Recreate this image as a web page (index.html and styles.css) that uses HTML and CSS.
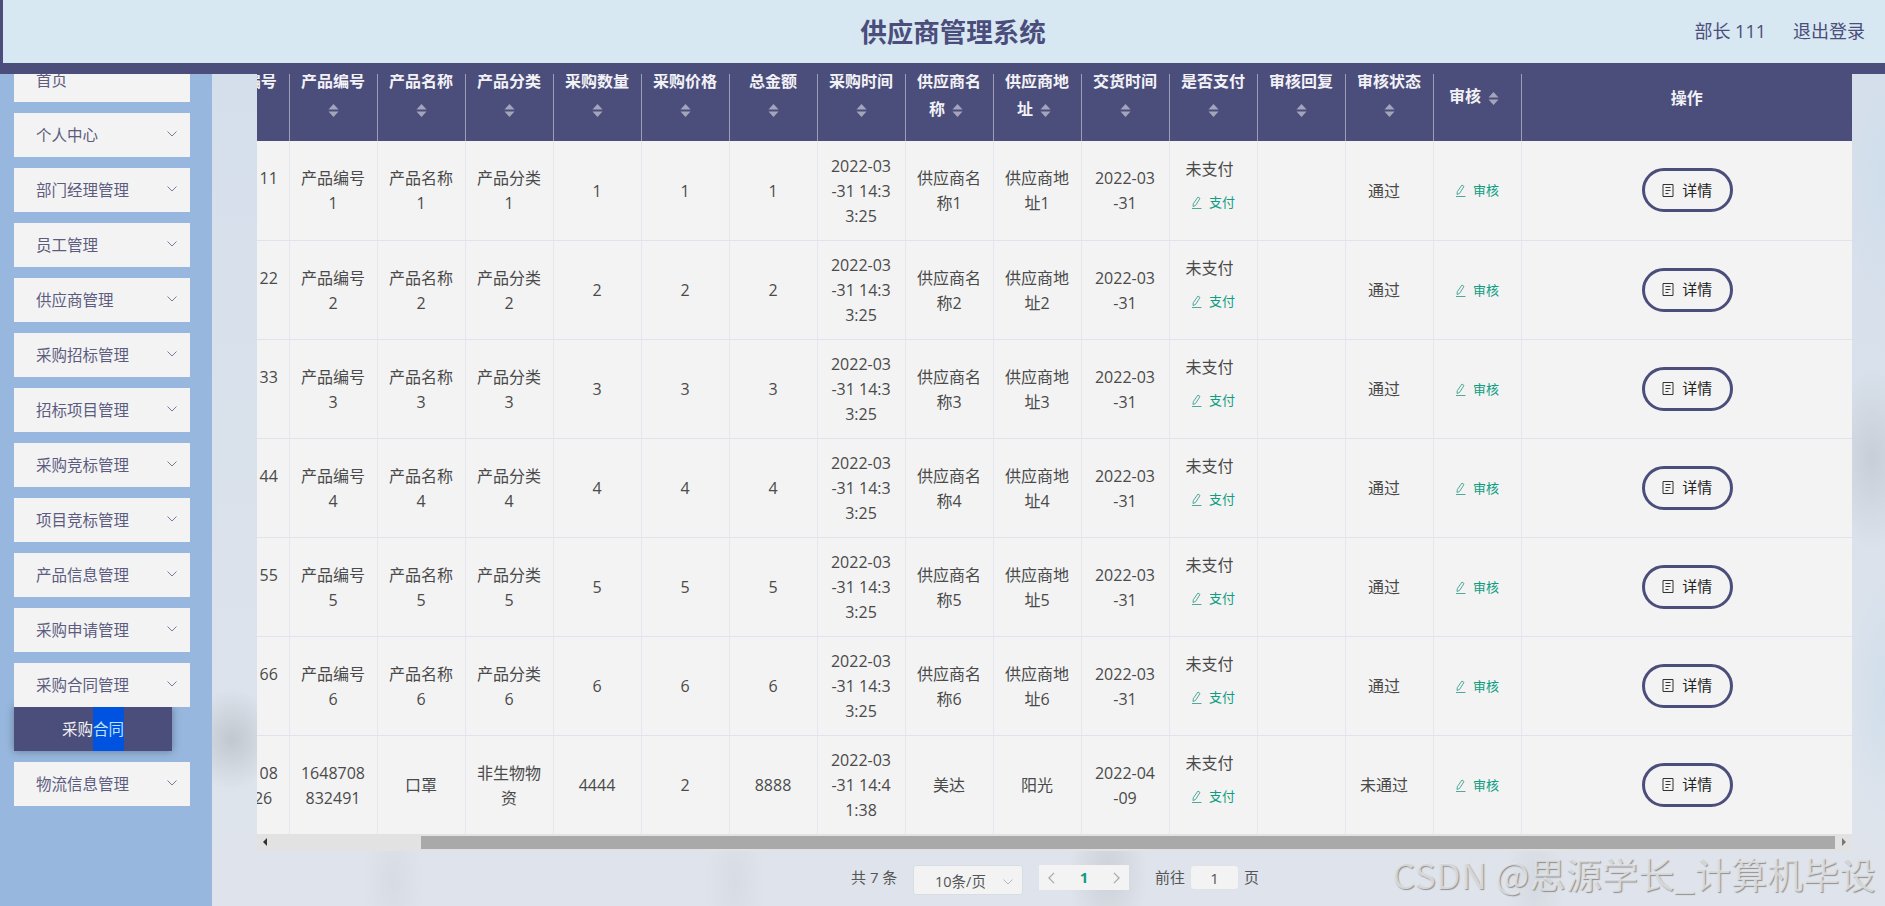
FILE: index.html
```html
<!DOCTYPE html>
<html lang="zh-CN">
<head>
    <meta charset="UTF-8">
    <meta name="viewport" content="width=device-width, initial-scale=1.0">
    <title>供应商管理系统</title>
    <link rel="stylesheet" href="styles.css">
</head>
<body>
    <header class="topBar">
        <div class="topTitle">供应商管理系统</div>
        <div class="topUser">
            <span>部长 111</span>
            <span>退出登录</span>
        </div>
    </header>
    <div class="layout">
        <aside class="sideMenu">
            <div class="menuItem">首页</div>
            <div class="menuItem">个人中心<svg class="chevron" viewBox="0 0 10 6"><path d="M.5.5 5 5 9.5.5"/></svg></div>
            <div class="menuItem">部门经理管理<svg class="chevron" viewBox="0 0 10 6"><path d="M.5.5 5 5 9.5.5"/></svg></div>
            <div class="menuItem">员工管理<svg class="chevron" viewBox="0 0 10 6"><path d="M.5.5 5 5 9.5.5"/></svg></div>
            <div class="menuItem">供应商管理<svg class="chevron" viewBox="0 0 10 6"><path d="M.5.5 5 5 9.5.5"/></svg></div>
            <div class="menuItem">采购招标管理<svg class="chevron" viewBox="0 0 10 6"><path d="M.5.5 5 5 9.5.5"/></svg></div>
            <div class="menuItem">招标项目管理<svg class="chevron" viewBox="0 0 10 6"><path d="M.5.5 5 5 9.5.5"/></svg></div>
            <div class="menuItem">采购竞标管理<svg class="chevron" viewBox="0 0 10 6"><path d="M.5.5 5 5 9.5.5"/></svg></div>
            <div class="menuItem">项目竞标管理<svg class="chevron" viewBox="0 0 10 6"><path d="M.5.5 5 5 9.5.5"/></svg></div>
            <div class="menuItem">产品信息管理<svg class="chevron" viewBox="0 0 10 6"><path d="M.5.5 5 5 9.5.5"/></svg></div>
            <div class="menuItem">采购申请管理<svg class="chevron" viewBox="0 0 10 6"><path d="M.5.5 5 5 9.5.5"/></svg></div>
            <div class="menuGroup">
                <div class="menuItem">采购合同管理<svg class="chevron" viewBox="0 0 10 6"><path d="M.5.5 5 5 9.5.5"/></svg></div>
                <div class="subItem">采购<span class="picked">合同</span></div>
            </div>
            <div class="menuItem">物流信息管理<svg class="chevron" viewBox="0 0 10 6"><path d="M.5.5 5 5 9.5.5"/></svg></div>
        </aside>
        <main class="mainArea">
            <div class="tableBox">
                <table class="dataTable">
                    <colgroup>
                        <col class="colNormal" span="15">
                        <col class="colAction">
                    </colgroup>
                    <thead id="tableHead"></thead>
                    <tbody id="tableBody"></tbody>
                </table>
            </div>
            <div class="scrollBar">
                <span class="scrollArrow arrowLeft"></span>
                <span class="scrollThumb"></span>
                <span class="scrollArrow arrowRight"></span>
            </div>
            <div class="pager">
                <span class="pagerTotal">共 7 条</span>
                <div class="pagerSelect">10条/页<svg class="chevron" viewBox="0 0 10 6"><path d="M.5.5 5 5 9.5.5"/></svg></div>
                <div class="pagerNums">
                    <svg class="pagerArrow" viewBox="0 0 8 14"><path d="M7 1 1 7l6 6"/></svg>
                    <b>1</b>
                    <svg class="pagerArrow" viewBox="0 0 8 14"><path d="m1 1 6 6-6 6"/></svg>
                </div>
                <span class="pagerGoto">前往</span>
                <div class="pagerInput">1</div>
                <span>页</span>
            </div>
        </main>
    </div>
    <div class="watermark">CSDN @思源学长_计算机毕设</div>
    <script src="table.js"></script>
</body>
</html>
```

FILE: styles.css
```css
* {
    box-sizing: border-box;
}

body {
    margin: 0;
    height: 906px;
    overflow: hidden;
    font-family: "Open Sans", "Noto Sans CJK SC", sans-serif;
    font-size: 16px;
    color: #4a4a4a;
    background-color: #dce4ec;
}

/* ---------- top bar ---------- */
.topBar {
    position: relative;
    z-index: 5;
    display: flex;
    align-items: center;
    justify-content: center;
    height: 74px;
    padding-bottom: 2px;
    background-color: #d7e8f3;
    border-left: 3px solid #4b4d7b;
    border-bottom: 11px solid #4b4d7b;
    color: #4b4d7b;
}

.topTitle {
    font-size: 26.5px;
    font-weight: 700;
    margin-left: 18px;
}

.topUser {
    position: absolute;
    right: 20px;
    top: 0;
    height: 60px;
    display: flex;
    align-items: center;
    gap: 27px;
    font-size: 18px;
}

.layout {
    display: flex;
    height: 832px;
}

/* ---------- side menu ---------- */
.sideMenu {
    width: 212px;
    height: 848px;
    flex-shrink: 0;
    display: flex;
    flex-direction: column;
    gap: 11px;
    margin-top: -16px;
    padding-left: 14px;
    background-color: #97b7de;
    font-size: 15.5px;
}

.menuItem {
    position: relative;
    width: 176px;
    height: 44px;
    padding-left: 22px;
    line-height: 44px;
    background-color: #f3f3f3;
    color: #5c5c80;
}

.chevron {
    position: absolute;
    right: 13px;
    top: 18px;
    width: 10px;
    height: 6px;
    fill: none;
    stroke: #7b7b92;
    stroke-width: 1;
}

.subItem {
    width: 158px;
    height: 44px;
    line-height: 44px;
    text-align: center;
    background-color: #4b4d7b;
    color: #f2f2f2;
    box-shadow: 0 0 8px rgba(0, 0, 0, .35);
}

.picked {
    display: inline-block;
    height: 44px;
    background-color: #0052e0;
    color: #bfe3ff;
}

/* ---------- main area ---------- */
.mainArea {
    flex: 1;
    min-width: 0;
    padding-left: 45px;
    padding-right: 33px;
    background:
        radial-gradient(ellipse 45px 50px at 20px 665px, rgba(150, 155, 160, .38), transparent),
        radial-gradient(ellipse 30px 70px at 181px 810px, rgba(175, 180, 185, .16), transparent),
        radial-gradient(ellipse 30px 70px at 523px 810px, rgba(175, 180, 185, .16), transparent),
        radial-gradient(ellipse 40px 70px at 896px 800px, rgba(165, 170, 175, .32), transparent),
        radial-gradient(ellipse 30px 70px at 1323px 810px, rgba(175, 180, 185, .2), transparent),
        radial-gradient(ellipse 45px 90px at 1660px 385px, rgba(170, 175, 185, .38), transparent),
        radial-gradient(ellipse 40px 120px at 1673px 110px, rgba(200, 220, 235, .5), transparent),
        radial-gradient(ellipse 40px 120px at 1673px 620px, rgba(200, 220, 235, .6), transparent),
        linear-gradient(180deg, #d5dfeb 0%, #dfe4ec 100%);
}

.tableBox {
    overflow: hidden;
    margin-top: -19px;
    height: 779px;
}

.dataTable {
    table-layout: fixed;
    border-collapse: collapse;
    width: 1651px;
    margin-left: -56px;
    background-color: #f3f3f3;
}

.colNormal {
    width: 88px;
}

.colAction {
    width: 331px;
}

.dataTable th {
    height: 86px;
    padding: 0 11px;
    border-right: 1px solid #9c9db8;
    background-color: #4b4d7b;
    color: #f2f2f6;
    font-weight: 700;
    line-height: 25px;
    text-align: center;
}

.dataTable th:last-child {
    border-right: 0;
}

.dataTable td {
    height: 99px;
    padding: 2px 11px 0;
    border-right: 1px solid #e6e6ee;
    border-bottom: 1px solid #e2e2ec;
    line-height: 25px;
    text-align: center;
    word-break: break-all;
}

.dataTable td:last-child {
    border-right: 0;
    padding-top: 0;
}

.dataTable td:first-child {
    padding-left: 8px;
    padding-right: 8px;
}

.dataTable td.stateCell {
    padding-right: 21px;
}

.sortIcon {
    display: inline-flex;
    align-items: center;
    justify-content: center;
    width: 24px;
    height: 34px;
    vertical-align: middle;
}

.sortIcon svg {
    width: 11px;
    height: 13px;
    fill: #a4a5bb;
}

.dataTable td.payCell {
    padding: 0 11px 8px;
}

.payText {
    text-align: left;
    padding-left: 5px;
}

.linkBtn {
    display: inline-flex;
    align-items: center;
    gap: 7px;
    font-size: 13px;
    color: #0f9d82;
}

.payCell .linkBtn {
    margin-top: 8px;
}

.linkBtn svg {
    width: 11px;
    height: 13px;
    fill: none;
    stroke: #4fa898;
    stroke-width: 1;
}

.detailBtn {
    display: inline-flex;
    align-items: center;
    justify-content: center;
    gap: 8px;
    width: 91px;
    height: 44px;
    margin-left: 1px;
    border: 3px solid #4b4d7b;
    border-radius: 22px;
    font-size: 15px;
    color: #222;
}

.detailBtn svg {
    width: 12px;
    height: 13px;
    fill: none;
    stroke: #333;
    stroke-width: 1;
}

/* ---------- scroll bar ---------- */
.scrollBar {
    display: flex;
    align-items: center;
    height: 17px;
    background-color: #e2e2e2;
    padding: 0 0 1px;
}

.scrollArrow {
    width: 17px;
    flex-shrink: 0;
    height: 14px;
    position: relative;
}

.scrollArrow::after {
    content: "";
    position: absolute;
    top: 3px;
    border-top: 4px solid transparent;
    border-bottom: 4px solid transparent;
}

.arrowLeft::after {
    left: 6px;
    border-right: 4px solid #333;
}

.arrowRight::after {
    left: 7px;
    border-left: 4px solid #777;
}

.scrollThumb {
    height: 13px;
    margin-left: 147px;
    flex: 1;
    background-color: #a9a9a9;
}

/* ---------- pager ---------- */
.pager {
    display: flex;
    align-items: flex-start;
    margin-top: 14px;
    padding-left: 594px;
    font-size: 15px;
    line-height: 25px;
    color: #555;
}

.pagerTotal {
    width: 62px;
}

.pagerSelect {
    position: relative;
    width: 110px;
    height: 30px;
    padding-left: 21px;
    font-size: 14.5px;
    line-height: 32px;
    background-color: #f3f3f3;
    border: 1px solid #d8dce4;
    border-radius: 3px;
}

.pagerSelect .chevron {
    top: 13px;
    right: 9px;
    stroke: #b4b7bf;
}

.pagerNums {
    display: flex;
    align-items: center;
    justify-content: space-between;
    width: 90px;
    height: 25px;
    margin-left: 16px;
    padding: 0 9px;
    background-color: #f3f3f3;
}

.pagerNums b {
    color: #0f9d82;
}

.pagerArrow {
    width: 7px;
    height: 12px;
    fill: none;
    stroke: #aaa;
    stroke-width: 1.5;
}

.pagerGoto {
    margin-left: 26px;
}

.pagerInput {
    width: 49px;
    height: 25px;
    margin: 0 5px;
    text-align: center;
    background-color: #f3f3f3;
    border: 1px solid #dfe2e8;
    border-radius: 4px;
}

/* ---------- watermark ---------- */
.watermark {
    position: absolute;
    left: 1392px;
    top: 851px;
    font-family: "Noto Sans CJK SC", sans-serif;
    font-size: 36px;
    line-height: 44px;
    letter-spacing: .2px;
    white-space: nowrap;
    color: rgba(232, 232, 232, .8);
    text-shadow: 1px 1px 1px rgba(100, 100, 100, .65);
}
```

FILE: table.js
```js
// table text is repeated row by row, so build it here
var sortIcon = '<span class="sortIcon"><svg viewBox="0 0 11 13"><path d="M5.5 0l5 5.500H.5zM5.500 13l5-5.500H.5z"/></svg></span>';
var penIcon = '<svg viewBox="0 0 11 13"><path d="M7 1l2 1.500-4.500 7-2.500 1 .3-2.800zM1 12.500h9.500"/></svg>';
var docIcon = '<svg viewBox="0 0 12 13"><path d="M1 .5h10v12H1zM3.500 3.500h5M3.500 6.500h5M3.500 9.500h3"/></svg>';

var headers = ['采购编号', '产品编号', '产品名称', '产品分类', '采购数量', '采购价格', '总金额', '采购时间',
    '供应商名称', '供应商地址', '交货时间', '是否支付', '审核回复', '审核状态', '审核'];

var headHtml = '<tr>';
headers.forEach(function (h) {
    headHtml += '<th>' + h + sortIcon + '</th>';
});
headHtml += '<th>操作</th></tr>';
document.getElementById('tableHead').innerHTML = headHtml;

var rows = [];
for (var n = 1; n <= 6; n++) {
    rows.push({
        first: '编号：' + n + n + n,
        code: '产品编号' + n,
        name: '产品名称' + n,
        type: '产品分类' + n,
        qty: n,
        price: n,
        total: n,
        time: '2022-03-31 14:33:25',
        supplier: '供应商名称' + n,
        addr: '供应商地址' + n,
        date: '2022-03-31',
        state: '通过'
    });
}
rows.push({
    first: '编号：08832526',
    code: '1648708832491',
    name: '口罩',
    type: '非生物物资',
    qty: 4444,
    price: 2,
    total: 8888,
    time: '2022-03-31 14:41:38',
    supplier: '美达',
    addr: '阳光',
    date: '2022-04-09',
    state: '未通过'
});

var bodyHtml = '';
rows.forEach(function (r) {
    bodyHtml += '<tr>' +
        '<td>' + r.first + '</td>' +
        '<td>' + r.code + '</td>' +
        '<td>' + r.name + '</td>' +
        '<td>' + r.type + '</td>' +
        '<td>' + r.qty + '</td>' +
        '<td>' + r.price + '</td>' +
        '<td>' + r.total + '</td>' +
        '<td>' + r.time + '</td>' +
        '<td>' + r.supplier + '</td>' +
        '<td>' + r.addr + '</td>' +
        '<td>' + r.date + '</td>' +
        '<td class="payCell"><div class="payText">未支付</div><span class="linkBtn">' + penIcon + '支付</span></td>' +
        '<td></td>' +
        '<td class="stateCell">' + r.state + '</td>' +
        '<td><span class="linkBtn">' + penIcon + '审核</span></td>' +
        '<td><span class="detailBtn">' + docIcon + '详情</span></td>' +
        '</tr>';
});
document.getElementById('tableBody').innerHTML = bodyHtml;
```
